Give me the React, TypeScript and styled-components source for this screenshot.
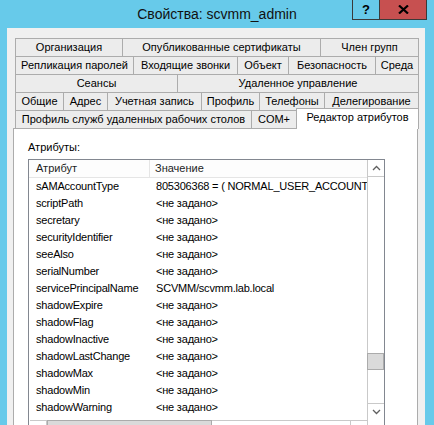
import styled, { createGlobalStyle } from "styled-components";

const frameBlue = "#67CAEA";
const tabBorder = "#ACACAC";
const scrollLine = "#C9C9C9";

const GlobalStyle = createGlobalStyle`
  html, body {
    margin: 0;
    padding: 0;
    background: ${frameBlue};
  }
  body {
    font-family: "Liberation Sans", Arial, sans-serif;
    color: #000;
  }
`;

type TabDef = { label: string; w: number; active?: boolean };

const tabRows: TabDef[][] = [
  [
    { label: "Организация", w: 107 },
    { label: "Опубликованные сертификаты", w: 198 },
    { label: "Член групп", w: 98 },
  ],
  [
    { label: "Репликация паролей", w: 118 },
    { label: "Входящие звонки", w: 104 },
    { label: "Объект", w: 51 },
    { label: "Безопасность", w: 87 },
    { label: "Среда", w: 43 },
  ],
  [
    { label: "Сеансы", w: 162 },
    { label: "Удаленное управление", w: 241 },
  ],
  [
    { label: "Общие", w: 48 },
    { label: "Адрес", w: 44 },
    { label: "Учетная запись", w: 94 },
    { label: "Профиль", w: 58 },
    { label: "Телефоны", w: 65 },
    { label: "Делегирование", w: 94 },
  ],
  [
    { label: "Профиль служб удаленных рабочих столов", w: 236 },
    { label: "COM+", w: 45 },
    { label: "Редактор атрибутов", w: 122, active: true },
  ],
];

const notSet = "<не задано>";

const attributes: [string, string][] = [
  ["sAMAccountType", "805306368 = ( NORMAL_USER_ACCOUNT )"],
  ["scriptPath", notSet],
  ["secretary", notSet],
  ["securityIdentifier", notSet],
  ["seeAlso", notSet],
  ["serialNumber", notSet],
  ["servicePrincipalName", "SCVMM/scvmm.lab.local"],
  ["shadowExpire", notSet],
  ["shadowFlag", notSet],
  ["shadowInactive", notSet],
  ["shadowLastChange", notSet],
  ["shadowMax", notSet],
  ["shadowMin", notSet],
  ["shadowWarning", notSet],
];

export default function App() {
  return (
    <>
      <GlobalStyle />
      <Window>
        <TitleBar>
          <span />
          <Title>Свойства: scvmm_admin</Title>
          <CaptionButtons>
            <HelpButton>?</HelpButton>
            <CloseButton>
              <svg width="11" height="9" viewBox="0 0 11 9">
                <path d="M1 0.5 L10 8.5 M10 0.5 L1 8.5" stroke="#000" strokeWidth="2.2" />
              </svg>
            </CloseButton>
          </CaptionButtons>
        </TitleBar>
        <Client>
          <TabStrip>
            {tabRows.map((row, i) => (
              <TabRow key={i}>
                {row.map((t) => (
                  <Tab key={t.label} $w={t.w} $active={t.active}>
                    {t.label}
                  </Tab>
                ))}
              </TabRow>
            ))}
          </TabStrip>
          <Panel>
            <Caption>Атрибуты:</Caption>
            <ListView>
              <ListMain>
                <HeaderRow>
                  <HeaderCell $first>Атрибут</HeaderCell>
                  <HeaderCell>Значение</HeaderCell>
                </HeaderRow>
                {attributes.map(([name, value]) => (
                  <Row key={name}>
                    <NameCell>{name}</NameCell>
                    <ValueCell>{value}</ValueCell>
                  </Row>
                ))}
              </ListMain>
              <VScroll>
                <ArrowBox $edge="bottom">
                  <Chevron dir="up" />
                </ArrowBox>
                <Track>
                  <VThumb $offset={176} />
                </Track>
                <ArrowBox $edge="top">
                  <Chevron dir="down" />
                </ArrowBox>
              </VScroll>
              <HScroll>
                <HArrowBox $edge="right" />
                <HThumb $length={165} />
                <HTrack />
                <HArrowBox $edge="left" />
              </HScroll>
              <Corner />
            </ListView>
          </Panel>
        </Client>
      </Window>
    </>
  );
}

function Chevron({ dir }: { dir: "up" | "down" }) {
  const d = dir === "up" ? "M1 5 L4.5 1.5 L8 5" : "M1 1 L4.5 4.5 L8 1";
  return (
    <svg width="9" height="6" viewBox="0 0 9 6">
      <path d={d} fill="none" stroke="#606060" strokeWidth="1.3" />
    </svg>
  );
}

const Window = styled.div`
  width: 434px;
  height: 425px;
  overflow: hidden;
  background: ${frameBlue};
  display: flex;
  flex-direction: column;
`;

const TitleBar = styled.div`
  height: 28px;
  flex: none;
  display: grid;
  grid-template-columns: 1fr auto 1fr;
  align-items: start;
`;

const Title = styled.div`
  font-size: 14px;
  line-height: 16px;
  padding-top: 6px;
  color: #111;
  white-space: nowrap;
`;

const CaptionButtons = styled.div`
  display: flex;
  justify-content: flex-end;
  padding-right: 7px;
`;

const HelpButton = styled.div`
  width: 28px;
  height: 20px;
  box-sizing: border-box;
  border: 1px solid #3a3a3a;
  border-top: none;
  background: ${frameBlue};
  display: flex;
  align-items: center;
  justify-content: center;
  font-weight: bold;
  font-size: 13px;
  color: #000;
`;

const CloseButton = styled.div`
  width: 47px;
  height: 20px;
  box-sizing: border-box;
  border: 1px solid #3a3a3a;
  border-top: none;
  border-left: none;
  background: #c75050;
  display: flex;
  align-items: center;
  justify-content: center;
`;

const Client = styled.div`
  flex: 1;
  margin-left: 7px;
  width: 418px;
  box-sizing: border-box;
  background: #f0f0f0;
  padding: 10px 7px 0 6px;
  display: flex;
  flex-direction: column;
`;

const TabStrip = styled.div`
  padding-left: 2px;
  display: flex;
  flex-direction: column;
`;

const TabRow = styled.div`
  display: flex;
  height: 18px;
`;

const Tab = styled.div<{ $w: number; $active?: boolean }>`
  flex: none;
  width: ${(p) => p.$w + 1}px;
  margin-right: -1px;
  box-sizing: border-box;
  height: ${(p) => (p.$active ? 21 : 19)}px;
  margin-top: ${(p) => (p.$active ? -2 : 0)}px;
  border: 1px solid ${tabBorder};
  border-bottom: ${(p) => (p.$active ? "none" : `1px solid ${tabBorder}`)};
  background: ${(p) => (p.$active ? "#fff" : "#ececec")};
  position: relative;
  z-index: ${(p) => (p.$active ? 2 : 0)};
  font-size: 11px;
  line-height: 17px;
  text-align: center;
  white-space: nowrap;
  overflow: hidden;
  color: #000;
`;

const Panel = styled.div`
  flex: 1;
  background: #fff;
  border: 1px solid ${tabBorder};
  border-bottom: none;
  padding: 11px 32px 0 14px;
  display: flex;
  flex-direction: column;
`;

const Caption = styled.div`
  font-size: 11px;
  line-height: 14px;
  margin-bottom: 5px;
  color: #000;
`;

const ListView = styled.div`
  width: 357px;
  box-sizing: border-box;
  border: 1px solid #828790;
  display: grid;
  grid-template-columns: 1fr 17px;
  grid-template-rows: 260px 17px;
  background: #fff;
`;

const ListMain = styled.div`
  overflow: hidden;
  display: flex;
  flex-direction: column;
`;

const HeaderRow = styled.div`
  display: grid;
  grid-template-columns: 121px 1fr;
  height: 18px;
  box-sizing: border-box;
  border-bottom: 1px solid #e5e5e5;
  background: #fdfdfd;
`;

const HeaderCell = styled.div<{ $first?: boolean }>`
  font-size: 11px;
  line-height: 17px;
  padding-left: ${(p) => (p.$first ? 7 : 5)}px;
  border-right: ${(p) => (p.$first ? "1px solid #e5e5e5" : "none")};
  color: #1e1e1e;
  white-space: nowrap;
`;

const Row = styled.div`
  display: grid;
  grid-template-columns: 121px 1fr;
  height: 17px;
  flex: none;
`;

const NameCell = styled.div`
  font-size: 11px;
  line-height: 17px;
  letter-spacing: -0.2px;
  padding-left: 7px;
  white-space: nowrap;
  overflow: hidden;
`;

const ValueCell = styled.div`
  font-size: 11px;
  line-height: 17px;
  letter-spacing: -0.2px;
  padding-left: 6px;
  white-space: nowrap;
  overflow: hidden;
`;

const VScroll = styled.div`
  display: flex;
  flex-direction: column;
  box-sizing: border-box;
  border-left: 1px solid ${scrollLine};
  background: #fff;
`;

const ArrowBox = styled.div<{ $edge: "top" | "bottom" }>`
  height: 17px;
  flex: none;
  box-sizing: border-box;
  border-${(p) => p.$edge}: 1px solid ${scrollLine};
  display: flex;
  align-items: center;
  justify-content: center;
`;

const Track = styled.div`
  flex: 1;
  display: flex;
  flex-direction: column;
`;

const VThumb = styled.div<{ $offset: number }>`
  margin-top: ${(p) => p.$offset}px;
  margin-left: -1px;
  height: 17px;
  box-sizing: border-box;
  border: 1px solid #ababab;
  background: #dadada;
`;

const HScroll = styled.div`
  display: flex;
  box-sizing: border-box;
  border-top: 1px solid ${scrollLine};
  margin-left: 1px;
`;

const HArrowBox = styled.div<{ $edge: "left" | "right" }>`
  width: 17px;
  flex: none;
  box-sizing: border-box;
  border-${(p) => p.$edge}: 1px solid ${scrollLine};
`;

const HThumb = styled.div<{ $length: number }>`
  width: ${(p) => p.$length}px;
  flex: none;
  box-sizing: border-box;
  margin-top: -1px;
  border: 1px solid #ababab;
  background: #dadada;
`;

const HTrack = styled.div`
  flex: 1;
`;

const Corner = styled.div`
  background: #fff;
  border-left: 1px solid ${scrollLine};
`;
